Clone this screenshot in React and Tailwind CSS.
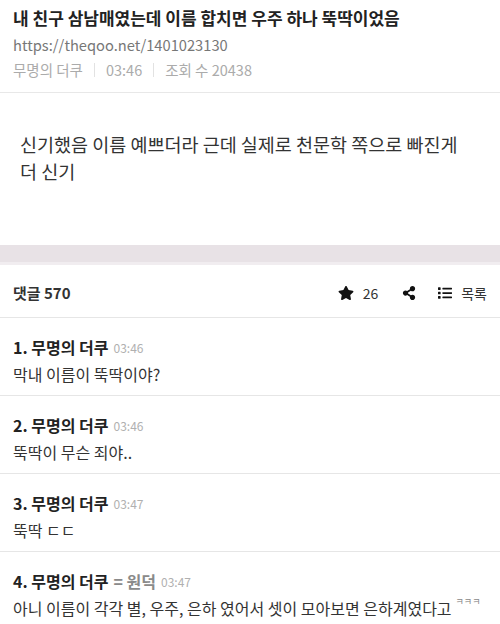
import { FaStar, FaShareAlt, FaList } from "react-icons/fa";

const comments = [
  { no: 1, time: "03:46", body: "막내 이름이 뚝딱이야?" },
  { no: 2, time: "03:46", body: "뚝딱이 무슨 죄야.." },
  { no: 3, time: "03:47", body: "뚝딱 ㄷㄷ" },
  { no: 4, time: "03:47", op: true, body: "아니 이름이 각각 별, 우주, 은하 였어서 셋이 모아보면 은하계였다고", tail: true },
];

function Comment({ c }) {
  return (
    <div className="border-b border-[#e6e6e6] px-[13px] pt-[17px] pb-[9px]">
      <div className="flex h-6 items-center whitespace-nowrap">
        <span className="text-[16px] font-bold leading-6 text-[#222]">{c.no}. 무명의 더쿠</span>
        {c.op && <span className="ml-[5px] text-[16px] font-semibold leading-6 text-[#8a8a8a]">= 원덕</span>}
        <span className="ml-[5px] pt-[2px] text-[12px] leading-6 text-[#b0b0b0]">{c.time}</span>
      </div>
      <div className="mt-[3px] h-6 text-[16px] leading-6 text-[#333] whitespace-nowrap">
        {c.body}
        {c.tail && (
          <span className="ml-[4px] align-top text-[9px] leading-[12px] text-[#888]">ㅋㅋㅋ</span>
        )}
      </div>
    </div>
  );
}

export default function App() {
  return (
    <div className="w-[500px] h-[624px] overflow-hidden bg-white font-['Noto_Sans_CJK_KR','Noto_Sans',sans-serif]">
      <div className="border-b border-[#e8e8e8] px-[13px] pt-[6px] pb-[10px]">
        <h1 className="text-[17px] font-bold leading-6 text-[#222] whitespace-nowrap">
          내 친구 삼남매였는데 이름 합치면 우주 하나 뚝딱이었음
        </h1>
        <div className="mt-[3px] text-[14.7px] leading-6 text-[#777]">https://theqoo.net/1401023130</div>
        <div className="mt-[1px] flex items-center text-[14.5px] leading-6 text-[#ababab]">
          <span>무명의 더쿠</span>
          <span className="mx-[11px] h-[14px] border-l border-[#e2e2e2]" />
          <span>03:46</span>
          <span className="mx-[11px] h-[14px] border-l border-[#e2e2e2]" />
          <span>조회 수 20438</span>
        </div>
      </div>

      <div className="h-[152px] px-5 pt-[38px] text-[18.5px] leading-[27px] text-[#333] whitespace-nowrap">
        신기했음 이름 예쁘더라 근데 실제로 천문학 쪽으로 빠진게
        <br />
        더 신기
      </div>

      <div className="h-[20px] bg-[#e8e2e6] border-b-[3px] border-[#f1edf0]" />

      <div className="flex h-[53px] items-center justify-between border-b border-[#e6e6e6] px-[13px] pt-[4px]">
        <span className="text-[15px] font-semibold text-[#333]">댓글 570</span>
        <div className="flex items-center text-[14px] text-[#333]">
          <FaStar className="h-[16px] w-[16px] text-[#111]" />
          <span className="ml-[9px]">26</span>
          <FaShareAlt className="ml-[24px] h-[14px] w-[14px] text-[#111]" />
          <FaList className="ml-[22px] h-[14px] w-[14px] text-[#111]" />
          <span className="ml-[9px]">목록</span>
        </div>
      </div>

      {comments.map((c) => (
        <Comment key={c.no} c={c} />
      ))}
    </div>
  );
}
